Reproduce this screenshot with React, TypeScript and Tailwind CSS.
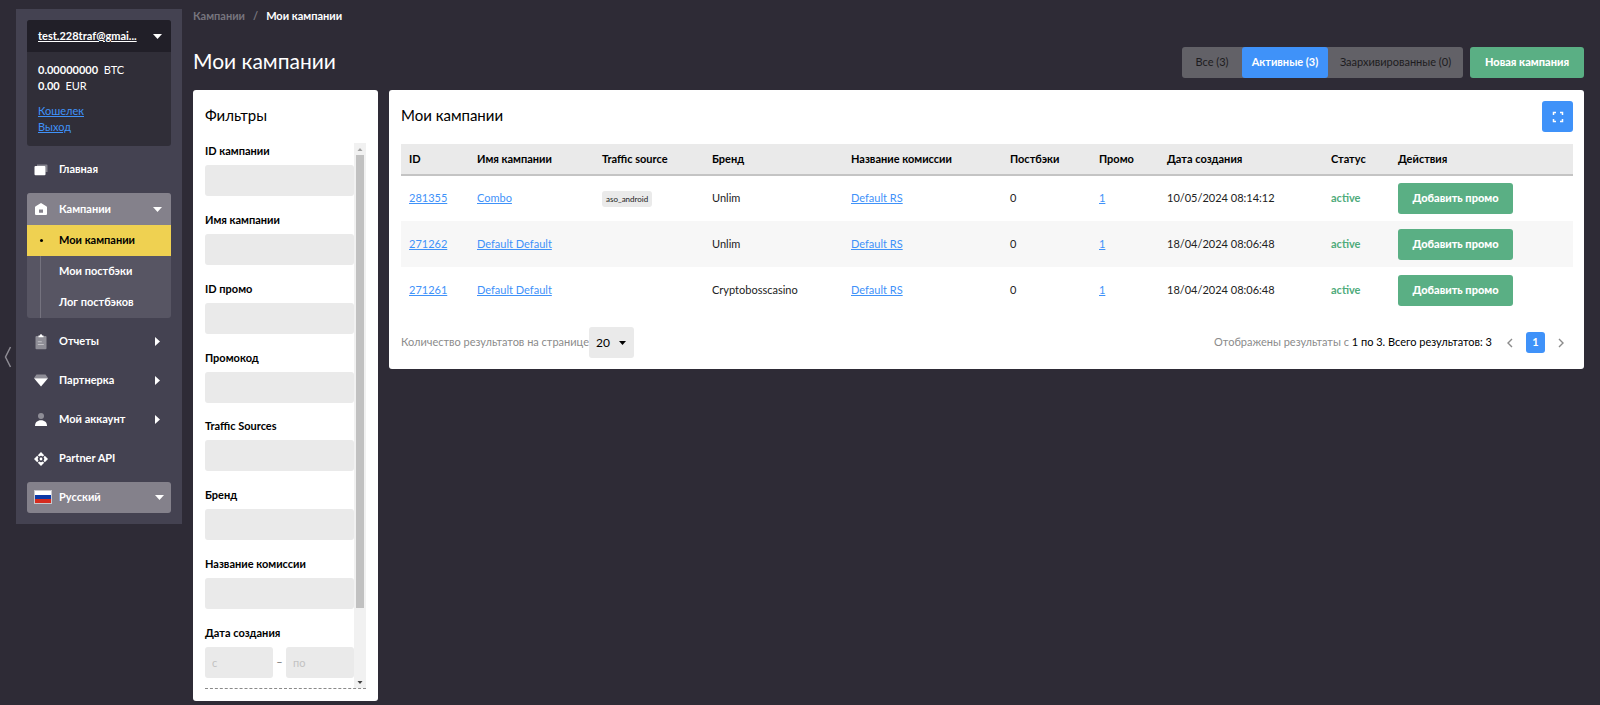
import type { ReactNode } from "react";

const filterFields = [
  "ID кампании",
  "Имя кампании",
  "ID промо",
  "Промокод",
  "Traffic Sources",
  "Бренд",
  "Название комиссии",
];

const columns = [
  { title: "ID", width: "w-[68px]" },
  { title: "Имя кампании", width: "w-[125px]" },
  { title: "Traffic source", width: "w-[110px]" },
  { title: "Бренд", width: "w-[139px]" },
  { title: "Название комиссии", width: "w-[159px]" },
  { title: "Постбэки", width: "w-[89px]" },
  { title: "Промо", width: "w-[68px]" },
  { title: "Дата создания", width: "w-[164px]" },
  { title: "Статус", width: "w-[67px]" },
  { title: "Действия", width: "w-auto" },
];

const campaigns = [
  { id: "281355", name: "Combo", source: "aso_android", brand: "Unlim", created: "10/05/2024 08:14:12" },
  { id: "271262", name: "Default Default", source: "", brand: "Unlim", created: "18/04/2024 08:06:48" },
  { id: "271261", name: "Default Default", source: "", brand: "Cryptobosscasino", created: "18/04/2024 08:06:48" },
];

const linkClass = "text-[#3f92f9] underline";

function Caret({ className = "" }: { className?: string }) {
  return (
    <svg aria-hidden="true" viewBox="0 0 9 5" className={`h-[5px] w-[9px] shrink-0 fill-current ${className}`}>
      <path d="M0 0h9L4.500 5z" />
    </svg>
  );
}

function CaretRight() {
  return (
    <svg aria-hidden="true" viewBox="0 0 5 9" className="h-[9px] w-[5px] shrink-0 fill-current">
      <path d="M0 0v9l5-4.500z" />
    </svg>
  );
}

function Icon({ children }: { children: ReactNode }) {
  return (
    <svg aria-hidden="true" viewBox="0 0 16 16" className="h-4 w-4 shrink-0 fill-white">
      {children}
    </svg>
  );
}

const icons = {
  home: (
    <Icon>
      <path d="M4 2.500h9.500a1 1 0 0 1 1 1V10h-2V4.500H4z" opacity=".35" />
      <rect x="1.500" y="4" width="11" height="9.300" rx="1" />
    </Icon>
  ),
  campaigns: (
    <Icon>
      <path
        fillRule="evenodd"
        d="M8 2l5.300 3.300c.5.300.7.700.7 1.200V13a1 1 0 0 1-1 1H3a1 1 0 0 1-1-1V6.500c0-.5.2-.9.700-1.200zM6 8.500v3.200h4V8.500z"
      />
    </Icon>
  ),
  reports: (
    <Icon>
      <path d="M3.500 2h9a1 1 0 0 1 1 1v11.200a1 1 0 0 1-1 1h-9a1 1 0 0 1-1-1V3a1 1 0 0 1 1-1z" opacity=".4" />
      <path d="M5.500 1.500h1.300a1.200 1.200 0 0 1 2.400 0h1.300v1.800h-5z" />
      <path d="M4.800 7.200h4v1h-4zM4.800 10h6v1h-6z" opacity=".45" />
    </Icon>
  ),
  affiliate: (
    <Icon>
      <path d="M3.500 1.500h9L15 5H1z" opacity=".4" />
      <path d="M1 5.200h14L8 13.500z" />
    </Icon>
  ),
  account: (
    <Icon>
      <circle cx="8" cy="4" r="3" opacity=".4" />
      <path d="M2 14c0-3.500 2.300-5.700 6-5.700s6 2.200 6 5.700z" />
    </Icon>
  ),
  api: (
    <Icon>
      <path d="M8 1l3.200 3.200L9.700 5.500C8.700 4.500 7.300 4.500 6.300 5.500L4.800 4.200zM8 15l3.200-3.200-1.500-1.300c-1 1-2.400 1-3.400 0l-1.500 1.300zM1 8l3.200-3.200 1.300 1.500c-1 1-1 2.400 0 3.400l-1.300 1.500zM15 8l-3.200-3.200-1.300 1.500c1 1 1 2.400 0 3.400l1.300 1.500z" />
      <circle cx="8" cy="8" r="1.400" />
    </Icon>
  ),
};

function NavItem({ icon, label, arrow = false }: { icon: ReactNode; label: string; arrow?: boolean }) {
  return (
    <a href="#" className="flex h-[31px] items-center pr-[11px] pl-[6px] font-bold">
      {icon}
      <span className="ml-[10px] flex-1">{label}</span>
      {arrow && <CaretRight />}
    </a>
  );
}

function Sidebar() {
  return (
    <aside className="mt-[9px] w-[166px] shrink-0 self-start bg-[#444251] p-[11px] text-[11px] text-white">
      <div className="overflow-hidden rounded-[3px] bg-[#302e38]">
        <button type="button" className="flex h-8 w-full items-center justify-between bg-[#211f28] pr-[9px] pl-[11px] font-bold">
          <span className="underline">test.228traf@gmai...</span>
          <Caret />
        </button>
        <div className="px-[11px] pt-[10px] pb-[11px] leading-4">
          <p><b>0.00000000</b>&nbsp; BTC</p>
          <p><b>0.00</b>&nbsp; EUR</p>
          <a href="#" className={`mt-[9px] block ${linkClass}`}>Кошелек</a>
          <a href="#" className={`block ${linkClass}`}>Выход</a>
        </div>
      </div>

      <nav className="mt-2 flex flex-col gap-2">
        <NavItem icon={icons.home} label="Главная" />
        <div className="overflow-hidden rounded-[3px] bg-[#575563] font-bold">
          <a href="#" className="flex h-8 items-center bg-[#84818b] pr-[9px] pl-[6px]">
            {icons.campaigns}
            <span className="ml-[10px] flex-1">Кампании</span>
            <Caret />
          </a>
          <a href="#" className="flex h-[31px] items-center bg-[#efd151] text-black">
            <span className="ml-[13px] h-[3px] w-[3px] rounded-full bg-black" />
            <span className="ml-4">Мои кампании</span>
          </a>
          <div className="ml-[13px] border-l border-[#74727e]">
            <a href="#" className="flex h-[31px] items-center pl-[18px]">Мои постбэки</a>
            <a href="#" className="flex h-[31px] items-center pl-[18px]">Лог постбэков</a>
          </div>
        </div>
        <NavItem icon={icons.reports} label="Отчеты" arrow />
        <NavItem icon={icons.affiliate} label="Партнерка" arrow />
        <NavItem icon={icons.account} label="Мой аккаунт" arrow />
        <NavItem icon={icons.api} label="Partner API" />
        <div className="relative">
          <select
            aria-label="Язык"
            className="block h-[31px] w-full appearance-none rounded-[3px] bg-[#84818b] pl-8 font-bold text-white"
          >
            <option>Русский</option>
          </select>
          <svg aria-hidden="true" viewBox="0 0 18 14" className="pointer-events-none absolute top-2 left-[7px] h-[14px] w-[18px]">
            <path fill="#c9c8cc" d="M0 0h18v14H0z" />
            <path fill="#fff" d="M1 1h16v4H1z" />
            <path fill="#0c39a6" d="M1 5h16v4H1z" />
            <path fill="#d52b1e" d="M1 9h16v4H1z" />
          </svg>
          <Caret className="pointer-events-none absolute top-[13px] right-[7px]" />
        </div>
      </nav>
    </aside>
  );
}

function Filters() {
  return (
    <section className="flex h-[calc(100vh-94px)] min-h-[600px] w-[185px] shrink-0 flex-col rounded-[3px] bg-white px-3 pb-3">
      <h2 className="pt-[14px] text-[15px] leading-[22px]">Фильтры</h2>
      <div className="mt-[17px] flex min-h-0 flex-1 border-b border-dashed border-[#8a8a8a]">
        <form className="flex min-w-0 flex-1 flex-col justify-between pb-[10px] text-[11px]">
          {filterFields.map((label) => (
            <label key={label} className="block font-bold">
              <span className="block h-[22px] leading-4">{label}</span>
              <input type="text" className="block h-[31px] w-full rounded-[3px] bg-[#eaeaea] px-[7px]" />
            </label>
          ))}
          <fieldset className="min-w-0">
            <legend className="block h-[22px] leading-4 font-bold">Дата создания</legend>
            <div className="flex items-center text-[#777]">
              <input aria-label="Дата с" placeholder="с" className="h-[31px] min-w-0 flex-1 rounded-[3px] bg-[#eaeaea] px-[7px] placeholder:text-[#c2c2c2]" />
              <span className="w-[13px] text-center">–</span>
              <input aria-label="Дата по" placeholder="по" className="h-[31px] min-w-0 flex-1 rounded-[3px] bg-[#eaeaea] px-[7px] placeholder:text-[#c2c2c2]" />
            </div>
          </fieldset>
        </form>
        <div aria-hidden="true" className="flex w-3 shrink-0 flex-col items-center bg-[#f1f1f1]">
          <svg viewBox="0 0 12 12" className="h-3 w-3 shrink-0 fill-[#a3a3a3]"><path d="M3.500 8h5L6 5z" /></svg>
          <div className="w-2 grow-[87] bg-[#c1c1c1]" />
          <div className="grow-[13]" />
          <svg viewBox="0 0 12 12" className="h-3 w-3 shrink-0 fill-[#404040]"><path d="M3.500 5h5L6 8z" /></svg>
        </div>
      </div>
    </section>
  );
}

function CampaignTable() {
  return (
    <table className="w-full table-fixed border-collapse text-left text-[11px] text-[#222]">
      <thead>
        <tr className="h-[31px] border-b-2 border-[#c4c4c4] bg-[#eaeaea] text-black">
          {columns.map((c) => (
            <th key={c.title} className={`${c.width} px-2 font-bold whitespace-nowrap`}>{c.title}</th>
          ))}
        </tr>
      </thead>
      <tbody>
        {campaigns.map((c) => (
          <tr key={c.id} className="h-[46px] even:bg-[#f7f7f7]">
            <td className="px-2"><a href="#" className={linkClass}>{c.id}</a></td>
            <td className="px-2"><a href="#" className={linkClass}>{c.name}</a></td>
            <td className="px-2">
              {c.source && (
                <span className="inline-block rounded-[3px] bg-[#eaeaea] px-1 align-middle text-[8px] leading-4">{c.source}</span>
              )}
            </td>
            <td className="px-2">{c.brand}</td>
            <td className="px-2"><a href="#" className={linkClass}>Default RS</a></td>
            <td className="px-2">0</td>
            <td className="px-2"><a href="#" className={linkClass}>1</a></td>
            <td className="px-2 whitespace-nowrap">{c.created}</td>
            <td className="px-2 font-bold text-[#4fab7b]">active</td>
            <td className="px-2">
              <button type="button" className="block h-[31px] w-[115px] rounded-[3px] bg-[#5aaf84] font-black text-white">
                Добавить промо
              </button>
            </td>
          </tr>
        ))}
      </tbody>
    </table>
  );
}

export default function App() {
  return (
    <div className="flex min-h-screen bg-[#2e2b36] font-['Lato','Noto_Sans',sans-serif] text-black">
      <button type="button" aria-label="Свернуть меню" className="flex h-screen w-4 shrink-0 items-center justify-center pt-2 text-[#8d8b93]">
        <svg viewBox="0 0 8 22" className="h-[22px] w-2 fill-none stroke-current"><path d="M6.500 1L1.500 11l5 10" strokeWidth="1.500" /></svg>
      </button>
      <Sidebar />
      <main className="mr-4 ml-[11px] min-w-0 flex-1 pb-1">
        <div className="flex h-8 items-center gap-2 text-[11px] font-bold">
          <a href="#" className="text-[#77757e]">Кампании</a>
          <span className="text-[#77757e]">/</span>
          <span className="text-white">Мои кампании</span>
        </div>
        <header className="flex h-[58px] items-end justify-between pb-3">
          <h1 className="text-[21px] leading-[34px] text-white">Мои кампании</h1>
          <div className="flex h-[31px] gap-[7px] text-[11px]">
            <div className="flex overflow-hidden rounded-[3px] bg-[#626167] text-[#1d1c20]">
              <button type="button" className="w-[60px]">Все (3)</button>
              <button type="button" className="w-[86px] rounded-[3px] bg-[#3f92f9] font-bold text-white">Активные (3)</button>
              <button type="button" className="w-[135px]">Заархивированные (0)</button>
            </div>
            <button type="button" className="w-[114px] rounded-[3px] bg-[#5aaf84] font-black text-white">Новая кампания</button>
          </div>
        </header>
        <div className="flex items-start gap-[11px]">
          <Filters />
          <section className="min-w-0 flex-1 rounded-[3px] bg-white px-3 py-[11px] pr-[11px]">
            <div className="mb-3 flex items-start justify-between">
              <h2 className="pt-[3px] text-[15px] leading-[22px]">Мои кампании</h2>
              <button type="button" aria-label="На весь экран" className="flex h-[31px] w-[31px] items-center justify-center rounded-[3px] bg-[#3f92f9] text-white">
                <svg viewBox="0 0 12 12" className="h-3 w-3 fill-none stroke-current" strokeWidth="1.500">
                  <path d="M1.500 4V1.500H4M8 1.500h2.500V4M10.500 8v2.500H8M4 10.500H1.500V8" />
                </svg>
              </button>
            </div>
            <CampaignTable />
            <div className="mt-[14px] flex items-center justify-between text-[11px]">
              <div className="flex items-center">
                <label htmlFor="page-size" className="text-[#8b8b8b]">Количество результатов на странице</label>
                <div className="relative">
                  <select id="page-size" className="block h-[31px] w-[45px] appearance-none rounded-[3px] bg-[#eaeaea] pl-[7px] text-xs">
                    <option>20</option>
                  </select>
                  <svg aria-hidden="true" viewBox="0 0 7 4" className="pointer-events-none absolute top-[14px] right-2 h-1 w-[7px]">
                    <path d="M0 0h7L3.500 4z" />
                  </svg>
                </div>
              </div>
              <div className="flex items-center pr-[9px]">
                <p className="text-[#8b8b8b]">
                  Отображены результаты с <span className="text-black">1 по 3. Всего результатов: 3</span>
                </p>
                <button type="button" aria-label="Назад" className="ml-[15px] text-[#8b8b8b]">
                  <svg viewBox="0 0 6 10" className="h-[10px] w-1.5 fill-none stroke-current"><path d="M5 1L1 5l4 4" strokeWidth="1.400" /></svg>
                </button>
                <button type="button" className="mx-[13px] h-[21px] w-[19px] rounded-[3px] bg-[#3f92f9] font-bold text-white">1</button>
                <button type="button" aria-label="Вперед" className="text-[#8b8b8b]">
                  <svg viewBox="0 0 6 10" className="h-[10px] w-1.5 fill-none stroke-current"><path d="M1 1l4 4-4 4" strokeWidth="1.400" /></svg>
                </button>
              </div>
            </div>
          </section>
        </div>
      </main>
    </div>
  );
}
